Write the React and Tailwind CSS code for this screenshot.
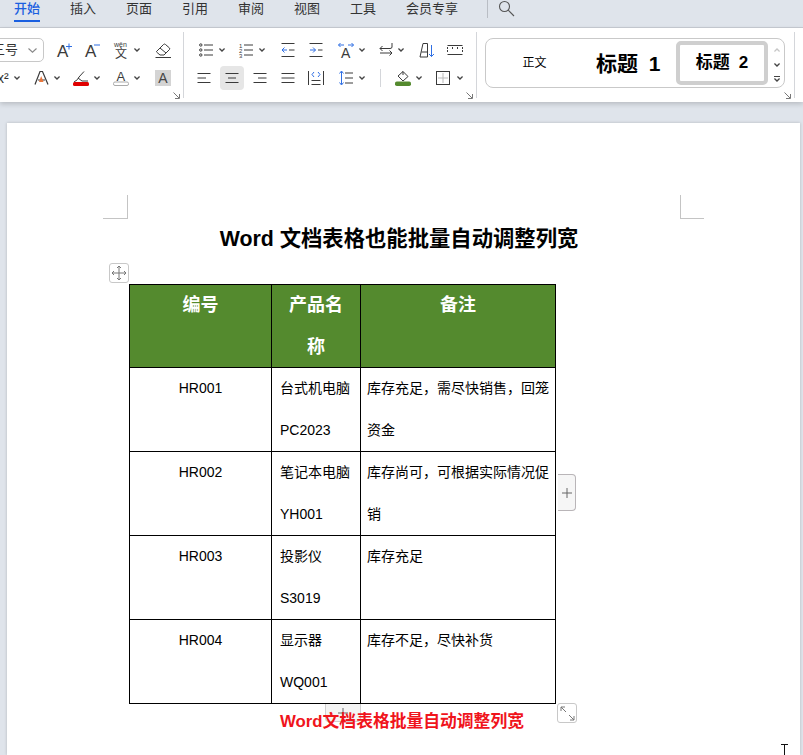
const tabs = ['插入', '页面', '引用', '审阅', '视图', '工具', '会员专享']

const rows = [
  ['HR001', ['台式机电脑', 'PC2023'], ['库存充足，需尽快销售，回笼', '资金']],
  ['HR002', ['笔记本电脑', 'YH001'], ['库存尚可，可根据实际情况促', '销']],
  ['HR003', ['投影仪', 'S3019'], ['库存充足']],
  ['HR004', ['显示器', 'WQ001'], ['库存不足，尽快补货']],
]

const DARK = '#3a3a3a'
const BLUE = '#2f6fe4'

function Chev({ className = '' }) {
  return (
    <svg width="6" height="4" viewBox="0 0 6 4" className={`shrink-0 ${className}`}>
      <polyline points="0.4,0.5 3,3 5.6,0.5" fill="none" stroke="#444" strokeWidth="1.4" />
    </svg>
  )
}

function Icon({ w = 16, children, className = '' }) {
  return (
    <svg width={w} height="16" viewBox={`0 0 ${w} 16`} fill="none" stroke={DARK} strokeWidth="1" className={`shrink-0 overflow-visible ${className}`}>
      {children}
    </svg>
  )
}

function Letter({ x = 1, y = 14, size = 16, fill = DARK, children }) {
  return (
    <text x={x} y={y} fontSize={size} fill={fill} stroke="none" fontFamily="Liberation Sans">
      {children}
    </text>
  )
}

// three lines, used by the align buttons
function Lines({ d }) {
  return (
    <Icon w={14}>
      <path d={d} />
    </Icon>
  )
}

function Launcher() {
  return (
    <svg width="7" height="7" viewBox="0 0 7 7" className="absolute right-[3px] bottom-[3px]" fill="none" stroke="#777" strokeWidth="1">
      <path d="M0.5 0.5 L6 6 M6.5 2 V6.5 H2" />
    </svg>
  )
}

function Divider() {
  return <div className="w-px h-[66px] mt-[4px] bg-[#d4d6da] shrink-0" />
}

function GroupOne() {
  return (
    <div className="relative w-[183px] shrink-0 pt-[10px] flex flex-col gap-[4px]">
      <div className="flex items-center h-[24px] ml-[-20px]">
        <div className="w-[64px] h-[24px] flex items-center justify-end gap-[10px] pr-[6px] border border-[#c8c8c8] rounded-[5px] text-[13px] text-[#333]">
          <span>三号</span>
          <svg width="9" height="5" viewBox="0 0 9 5" fill="none" stroke="#888" strokeWidth="1.1">
            <polyline points="0.5,0.5 4.5,4.2 8.5,0.5" />
          </svg>
        </div>
        <Icon className="ml-[12px]">
          <Letter y={15} size={17}>A</Letter>
          <path d="M10 4.5 H16 M13 1.5 V7.5" stroke={BLUE} />
        </Icon>
        <Icon className="ml-[12px]">
          <Letter y={15} size={17}>A</Letter>
          <path d="M10 3 H16" stroke={BLUE} />
        </Icon>
        <Icon className="ml-[13px]">
          <text x="1" y="5" fontSize="7" fill={DARK} stroke="none" fontFamily="Liberation Sans">wěn</text>
          <text x="2" y="16" fontSize="12" fill={DARK} stroke="none" fontFamily="Noto Sans CJK SC">文</text>
        </Icon>
        <Chev className="ml-[5px]" />
        <Icon className="ml-[15px]">
          <path d="M1.5 9.5 L8.5 2.5 Q9.5 1.5 10.5 2.5 L14.5 6 Q15 7 14.5 7.5 L9 13 H5 L1.5 10 Z M5 6 L11 11" />
          <path d="M0.5 15.5 H16" />
        </Icon>
      </div>
      <div className="flex items-center h-[24px]">
        <span className="w-[14px] text-[14px] text-[#333] leading-none ml-[-3px] whitespace-nowrap">
          x²
        </span>
        <Chev className="ml-[3px]" />
        <Icon w={15} className="ml-[14px]">
          <path d="M1 14.5 L6 1.5 H8.5 L14 14.5 M4 10 H11" strokeWidth="1.2" />
          <path d="M7.2 6 L9.5 12 H5 Z" fill="#e8763c" stroke="none" />
        </Icon>
        <Chev className="ml-[5px]" />
        <Icon className="ml-[13px]">
          <path d="M1 12 Q5 10 6 7 L11 1.5 M5 8 L9 11 M9 11 L15 11" />
          <rect x="0" y="12" width="16" height="4" rx="1.5" fill="#e00000" stroke="none" />
        </Icon>
        <Chev className="ml-[5px]" />
        <Icon className="ml-[13px]">
          <Letter x={3.5} y={11} size={13}>A</Letter>
          <rect x="0.5" y="12" width="15" height="3.5" rx="1.5" stroke="#aaa" />
        </Icon>
        <Chev className="ml-[5px]" />
        <div className="ml-[15px] w-[16px] h-[16px] bg-[#d4d4d4] flex items-center justify-center text-[14px] leading-none text-[#444]">
          A
        </div>
      </div>
      <Launcher />
    </div>
  )
}

function GroupTwo() {
  return (
    <div className="relative w-[292px] shrink-0 pt-[10px] flex flex-col gap-[4px]">
      <div className="flex items-center h-[24px] pl-[15px]">
        <Icon w={14}>
          <path d="M5 3 H14 M5 8 H14 M5 13 H14" />
          <circle cx="1.8" cy="3" r="1.2" />
          <circle cx="1.8" cy="8" r="1.2" />
          <circle cx="1.8" cy="13" r="1.2" />
        </Icon>
        <Chev className="ml-[6px]" />
        <Icon w={14} className="ml-[14px]">
          <path d="M5 3 H14 M5 8 H14 M5 13 H14" />
          <text x="0" y="6" fontSize="6" fill={DARK} stroke="none" fontFamily="Liberation Sans">1</text>
          <text x="0" y="11" fontSize="6" fill={DARK} stroke="none" fontFamily="Liberation Sans">2</text>
          <text x="0" y="16" fontSize="6" fill={DARK} stroke="none" fontFamily="Liberation Sans">3</text>
        </Icon>
        <Chev className="ml-[6px]" />
        <Icon w={14} className="ml-[16px]">
          <path d="M0.5 1.5 H13.5 M8 8 H13.5 M0.5 14.5 H13.5" />
          <path d="M6 8 H1 M3.5 5.5 L1 8 L3.5 10.5" stroke={BLUE} />
        </Icon>
        <Icon w={14} className="ml-[14px]">
          <path d="M0.5 1.5 H13.5 M9 8 H13.5 M0.5 14.5 H13.5" />
          <path d="M1 8 H6.5 M4 5.5 L6.5 8 L4 10.5" stroke={BLUE} />
        </Icon>
        <Icon className="ml-[15px]">
          <Letter x={3} y={16} size={14}>A</Letter>
          <path d="M0.5 3 H6 M2.5 1 L0.5 3 L2.5 5 M10 3 H15.5 M13.5 1 L15.5 3 L13.5 5" stroke={BLUE} />
        </Icon>
        <Chev className="ml-[5px]" />
        <Icon w={14} className="ml-[14px]">
          <path d="M13 1 V5 Q13 6.5 11 6.5 H1 M3.5 4 L1 6.5 L3.5 9 M1 11 H13 M10.5 8.5 L13 11 L10.5 13.5" />
        </Icon>
        <Chev className="ml-[5px]" />
        <Icon className="ml-[15px]">
          <path d="M1 15 L4 1.5 H8.5 V15 H1 M2.5 10 H8.5" />
          <path d="M12.5 3 V14.5 M10 12 L12.5 14.5 L15 12" stroke={BLUE} />
        </Icon>
        <Icon className="ml-[12px]">
          <path d="M0.5 3.5 H15.5 M0.5 12.5 H15.5" />
          <path d="M0.5 5 V11 M5.5 5 V7 M10.5 5 V7 M15.5 5 V11" strokeDasharray="2 1" />
        </Icon>
      </div>
      <div className="flex items-center h-[24px] pl-[13px]">
        <Lines d="M0.5 3.5 H13.5 M0.5 8 H9 M0.5 12.5 H13.5" />
        <div className="ml-[9px] w-[24px] h-[24px] rounded-[4px] bg-[#e6e6e6] flex items-center justify-center">
          <Lines d="M0.5 3.5 H13.5 M3 8 H11 M0.5 12.5 H13.5" />
        </div>
        <div className="ml-[9px] flex">
          <Lines d="M0.5 3.5 H13.5 M5 8 H13.5 M0.5 12.5 H13.5" />
        </div>
        <div className="ml-[14px] flex">
          <Lines d="M0.5 3.5 H13.5 M0.5 8 H13.5 M0.5 12.5 H13.5" />
        </div>
        <Icon className="ml-[13px]">
          <path d="M0.5 1 V15 M15.5 1 V15 M3.5 14.5 H12.5 M3.5 10.5 H12.5" />
          <path d="M6 2 L4 4.5 L6 7 M10 2 L12 4.5 L10 7" stroke={BLUE} />
        </Icon>
        <Icon w={14} className="ml-[15px]">
          <path d="M6 3 H14 M6 8 H14 M6 13 H14" />
          <path d="M2.5 1.5 V14.5 M0.5 3.5 L2.5 1 L4.5 3.5 M0.5 12.5 L2.5 15 L4.5 12.5" stroke={BLUE} />
        </Icon>
        <Chev className="ml-[6px]" />
        <div className="ml-[15px] w-px h-[18px] bg-[#d4d6da]" />
        <Icon className="ml-[14px]">
          <path d="M3 6 L8 1.5 L13 6.5 L8 11 Z M8 1.5 L8 5" />
          <rect x="0" y="11.5" width="16" height="4.5" rx="1.8" fill="#548a2e" stroke="none" />
        </Icon>
        <Chev className="ml-[5px]" />
        <Icon w={14} className="ml-[14px]">
          <rect x="0.5" y="1.5" width="13" height="13" />
          <path d="M7 3 V13 M2 8 H12" stroke="#bbb" />
        </Icon>
        <Chev className="ml-[7px]" />
      </div>
      <Launcher />
    </div>
  )
}

function StyleGallery() {
  return (
    <div className="relative w-[317px] shrink-0 pt-[10px] pl-[8px]">
      <div className="w-[300px] h-[50px] border border-[#c9c9c9] rounded-[8px] flex items-center">
        <div className="w-[97px] text-center text-[12px] text-black">正文</div>
        <div className="w-[93px] pl-[13px] text-[21px] font-bold text-black whitespace-nowrap leading-none">
          标题 <span className="ml-[5px]">1</span>
        </div>
        <div className="w-[92px] h-[44px] border-[4px] border-[#cfcfcf] rounded-[5px] flex items-center justify-center gap-[9px] text-[17px] font-bold text-black whitespace-nowrap">
          <span>标题</span>
          <span>2</span>
        </div>
        <div className="flex-1 h-full flex flex-col items-center pl-[1px] pt-[9px]">
          <Chev className="rotate-180 opacity-30" />
          <Chev className="mt-[11px]" />
          <div className="mt-[9px] w-[6px] h-px bg-[#444]" />
          <Chev className="mt-[1px]" />
        </div>
      </div>
      <Launcher />
    </div>
  )
}

function Cell({ lines, height, className = '' }) {
  return (
    <td className={`border border-black align-top p-0 ${className}`}>
      <div className={`flow-root ${height}`}>
        <div className="-mt-px">
          {lines.map((line) => (
            <div key={line}>{line}</div>
          ))}
        </div>
      </div>
    </td>
  )
}

function DocTable() {
  return (
    <table className="border-collapse table-fixed w-[426px] ml-[122px] text-[14px] leading-[42px] text-black">
      <colgroup>
        <col className="w-[142px]" />
        <col className="w-[89px]" />
        <col className="w-[195px]" />
      </colgroup>
      <thead>
        <tr className="bg-[#548a2e] text-white text-[18px] font-bold">
          <Cell lines={['编号']} height="h-[82px]" className="text-center" />
          <Cell lines={['产品名', '称']} height="h-[82px]" className="text-center" />
          <Cell lines={['备注']} height="h-[82px]" className="text-center" />
        </tr>
      </thead>
      <tbody>
        {rows.map(([code, product, note]) => (
          <tr key={code}>
            <Cell lines={[code]} height="h-[83px]" className="text-center" />
            <Cell lines={product} height="h-[83px]" className="pl-[8px]" />
            <Cell lines={note} height="h-[83px]" className="pl-[6px]" />
          </tr>
        ))}
      </tbody>
    </table>
  )
}

export default function App() {
  return (
    <div className="relative w-[803px] h-[755px] overflow-hidden flex flex-col bg-[#dfe4eb] [font-family:'Liberation_Sans','Noto_Sans_CJK_SC',sans-serif]">
      {/* tabs */}
      <div className="h-[28px] shrink-0 flex items-start pl-[14px] gap-[30px] text-[13px] text-[#333] border-b border-[#c8ccd3]">
        <div className="h-[22px] leading-[18px] font-medium text-[#1a5fe0] border-b-2 border-[#1a5fe0]">开始</div>
        {tabs.map((t) => (
          <div key={t} className="leading-[18px] whitespace-nowrap">{t}</div>
        ))}
        <div className="ml-[-1px] w-px h-[18px] bg-[#b9bdc4]" />
        <svg width="17" height="17" viewBox="0 0 17 17" className="ml-[-20px]" fill="none" stroke="#555" strokeWidth="1.1">
          <circle cx="6.5" cy="6.5" r="5" />
          <path d="M10.2 10.2 L16 16" />
        </svg>
      </div>

      {/* ribbon */}
      <div className="relative z-10 h-[74px] shrink-0 flex bg-white shadow-[0_2px_5px_rgba(0,0,0,0.18)]">
        <GroupOne />
        <Divider />
        <GroupTwo />
        <Divider />
        <StyleGallery />
        <Divider />
      </div>

      {/* page */}
      <div className="relative mt-[21px] ml-[7px] w-[793px] flex-1 bg-white pt-[72px] shadow-[0_0_3px_rgba(0,0,0,0.2)]">
        <div className="flex justify-between ml-[96px] w-[601px]">
          <div className="w-[25px] h-[24px] border-r border-b border-[#c4c4c4]" />
          <div className="w-[24px] h-[24px] border-l border-b border-[#c4c4c4]" />
        </div>
        <h1 className="mt-[4px] ml-[122px] w-[540px] h-[32px] text-center text-[21.33px] leading-[32px] font-bold text-black whitespace-nowrap">
          Word 文档表格也能批量自动调整列宽
        </h1>
        <div className="mt-[29px]">
          <DocTable />
        </div>

        {/* table handles */}
        <div className="absolute left-[102px] top-[140px] w-[20px] h-[20px] bg-white border border-[#c8c8c8] rounded-[3px] flex items-center justify-center">
          <svg width="16" height="16" viewBox="0 0 16 16" fill="none" stroke="#777" strokeWidth="1">
            <path d="M8 1 V15 M1 8 H15 M6 3 L8 1 L10 3 M6 13 L8 15 L10 13 M3 6 L1 8 L3 10 M13 6 L15 8 L13 10" />
          </svg>
        </div>
        <div className="absolute left-[551px] top-[351px] w-[18px] h-[37px] bg-[#f6f6f6] border border-l-0 border-[#b9b5b8] rounded-r-[4px] flex items-center justify-center">
          <svg width="10" height="10" viewBox="0 0 10 10" stroke="#666" strokeWidth="1"><path d="M5 0 V10 M0 5 H10" /></svg>
        </div>
        <div className="absolute left-[318px] top-[581px] w-[36px] h-[18px] bg-[#f4f4f4] border border-t-0 border-[#cfcfcf] rounded-b-[4px] flex items-center justify-center">
          <svg width="10" height="10" viewBox="0 0 10 10" stroke="#666" strokeWidth="1"><path d="M5 0 V10 M0 5 H10" /></svg>
        </div>
        <div className="absolute left-[550px] top-[580px] w-[20px] h-[20px] bg-white border border-[#c8c8c8] rounded-[3px] flex items-center justify-center">
          <svg width="15" height="15" viewBox="0 0 15 15" fill="none" stroke="#777" strokeWidth="1">
            <path d="M1 1 L6 6 M1 5 V1 H5 M14 14 L9 9 M14 10 V14 H10" />
          </svg>
        </div>

        <p className="relative mt-px ml-[122px] w-[546px] text-center text-[16.8px] leading-[34px] font-bold text-[#f0141c] whitespace-nowrap">
          Word文档表格批量自动调整列宽
        </p>

        {/* text cursor */}
        <svg width="7" height="12" viewBox="0 0 7 12" className="absolute left-[774px] top-[621px]" fill="none" stroke="#111" strokeWidth="1">
          <path d="M0 0.5 H7 M3.5 0.5 V11.5 M1.5 11.5 H5.5" />
        </svg>
      </div>
    </div>
  )
}
